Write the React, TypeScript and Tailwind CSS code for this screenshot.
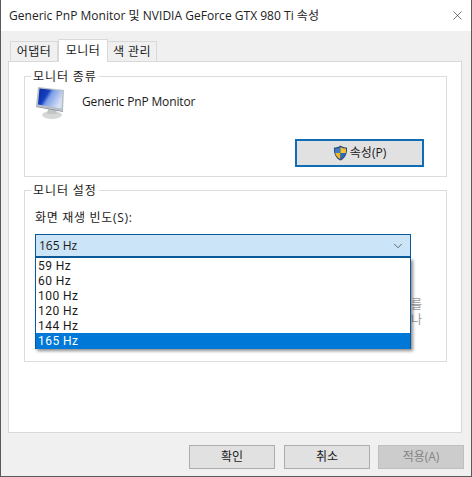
import React from 'react';
import { ChevronDown, X } from 'lucide-react';

const rates = ['59 Hz', '60 Hz', '100 Hz', '120 Hz', '144 Hz', '165 Hz'];
const font = "font-['Segoe_UI','Open_Sans','Noto_Sans_CJK_KR',sans-serif]";

function MonitorIcon() {
  return (
    <svg width="32" height="34" viewBox="0 0 32 34" className="shrink-0">
      <defs>
        <linearGradient id="scr" x1="0" y1="0" x2="1" y2="0.5">
          <stop offset="0" stopColor="#0a2a9a" />
          <stop offset="0.4" stopColor="#1540c0" />
          <stop offset="0.55" stopColor="#7d9fe8" />
          <stop offset="1" stopColor="#d5e0f5" />
        </linearGradient>
      </defs>
      <ellipse cx="17" cy="30" rx="10" ry="4" fill="#d6d8d8" />
      <path d="M13 24 L21 25 L22 29 L12 29 Z" fill="#c2c5c6" />
      <path d="M3 2 L29 5 L28 26 L1 21 Z" fill="#b9bfc6" />
      <path d="M4.5 3.5 L27.5 6 L26.5 23.5 L3 19.5 Z" fill="url(#scr)" />
      <path d="M1 21 L28 26 L28 27 L1 22 Z" fill="#8f959c" />
    </svg>
  );
}

function ShieldIcon() {
  return (
    <svg width="15" height="16" viewBox="0 0 15 16" className="shrink-0">
      <path d="M7.5 0.5 C9.5 2 11.5 2.5 14 2.5 C14.5 9 12 13.5 7.5 15.5 C3 13.5 0.5 9 1 2.5 C3.5 2.5 5.5 2 7.5 0.5 Z" fill="#2a4a7c" />
      <path d="M7.5 2 L7.5 8 L2.2 8 C2 6.5 2 5 2.1 3.6 C4 3.5 6 3 7.5 2 Z" fill="#3f7cc4" />
      <path d="M7.5 2 C9 3 11 3.5 12.9 3.6 C13 5 13 6.5 12.8 8 L7.5 8 Z" fill="#f4c430" />
      <path d="M2.2 8 L7.5 8 L7.5 14.2 C4.6 12.8 2.8 10.8 2.2 8 Z" fill="#f0b820" />
      <path d="M7.5 8 L12.8 8 C12.2 10.8 10.4 12.8 7.5 14.2 Z" fill="#2f69b3" />
    </svg>
  );
}

function Group({ title, className, children }: { title: string; className: string; children: React.ReactNode }) {
  return (
    <fieldset className={`ml-[15px] mr-[14px] border border-[#dcdcdc] ${className}`}>
      <legend className="ml-[6px] px-[2px] leading-[15px] text-[#1a1a1a] tracking-[0.9px]">{title}</legend>
      {children}
    </fieldset>
  );
}

export default function App() {
  return (
    <div className={`flex h-[477px] w-[472px] flex-col overflow-hidden border-x border-b border-[#5a5a5a] bg-[#f0f0f0] text-[12px] text-[#1a1a1a] ${font}`}>
      {/* Title bar */}
      <div className="flex h-[31px] shrink-0 items-center justify-between bg-white pl-[8px] pr-[6px]">
        <span className="text-[12px] tracking-[0.02px] text-[#222]">Generic PnP Monitor 및 NVIDIA GeForce GTX 980 Ti 속성</span>
        <X size={15} strokeWidth={1} className="text-[#222]" />
      </div>

      {/* Tabs */}
      <div className="flex h-[30px] shrink-0 items-end pl-[9px]">
        <div className="flex h-[20px] w-[48px] items-center justify-center border border-b-0 border-[#d9d9d9] bg-[#f0f0f0] tracking-[0.5px]">어댑터</div>
        <div className="relative z-10 mb-[-1px] flex h-[23px] w-[50px] items-center justify-center border border-b-0 border-[#d9d9d9] bg-white tracking-[0.5px]">모니터</div>
        <div className="flex h-[20px] w-[49px] items-center justify-center border border-b-0 border-l-0 border-[#d9d9d9] bg-[#f0f0f0] tracking-[0.5px]">색 관리</div>
      </div>

      {/* Tab page */}
      <div className="ml-[7px] mr-[9px] h-[372px] shrink-0 border border-[#d9d9d9] bg-white pt-[7px]">
        <Group title="모니터 종류" className="h-[108px]">
          <div className="flex items-center gap-[15px] pl-[10px] pt-[1px]">
            <MonitorIcon />
            <span className="tracking-[-0.15px]">Generic PnP Monitor</span>
          </div>
          <div className="mr-[22px] mt-[20px] flex justify-end">
            <button className="flex h-[28px] w-[129px] items-center justify-center border-[2px] border-[#0f6cb5] bg-[#e1e1e1]">
              <ShieldIcon />
              <span className="ml-[2px]">속성(P)</span>
            </button>
          </div>
        </Group>

        <Group title="모니터 설정" className="mt-[6px] h-[179px]">
          <div className="px-[10px] pt-[12px]">
            <div className="leading-[16px] tracking-[0.7px]">화면 재생 빈도(S):</div>
            <div className="relative mt-[8px] w-[376px]">
              <div className="flex h-[24px] items-center justify-between border border-[#0a5a99] border-b-[2px] bg-[#cce4f7] pl-[3px] pr-[5px]">
                <span>165 Hz</span>
                <ChevronDown size={14} strokeWidth={1.2} className="text-[#333]" />
              </div>
              {/* Dropdown covers the explanation text behind it */}
              <div className="absolute left-0 top-[24px] z-10 h-[91px] w-[376px] border-x border-b border-[#0a5a99] bg-white font-['Roboto',sans-serif] tracking-[0.45px] shadow-[2px_2px_3px_rgba(0,0,0,0.45)]">
                {rates.map((r, i) => (
                  <div key={r} className={`pl-[2px] pt-[1px] leading-[15px] ${i === 5 ? 'h-[16px] bg-[#0078d7] text-white' : 'h-[15px]'}`}>
                    {r}
                  </div>
                ))}
              </div>
              <div className="ml-[376px] mt-[39px] h-[40px] w-fit text-[12px] leading-[15px] text-[#999]">
                <div>를</div>
                <div>나</div>
              </div>
            </div>
          </div>
        </Group>
      </div>

      {/* Dialog buttons */}
      <div className="mr-[7px] mt-[12px] flex justify-end gap-[8px]">
        <button className="mr-[1px] h-[24px] w-[86px] border border-[#adadad] bg-[#e1e1e1]">확인</button>
        <button className="h-[24px] w-[86px] border border-[#adadad] bg-[#e1e1e1]">취소</button>
        <button className="h-[24px] w-[86px] border border-[#bfbfbf] bg-[#cccccc] text-[#838383]">적용(A)</button>
      </div>
    </div>
  );
}
